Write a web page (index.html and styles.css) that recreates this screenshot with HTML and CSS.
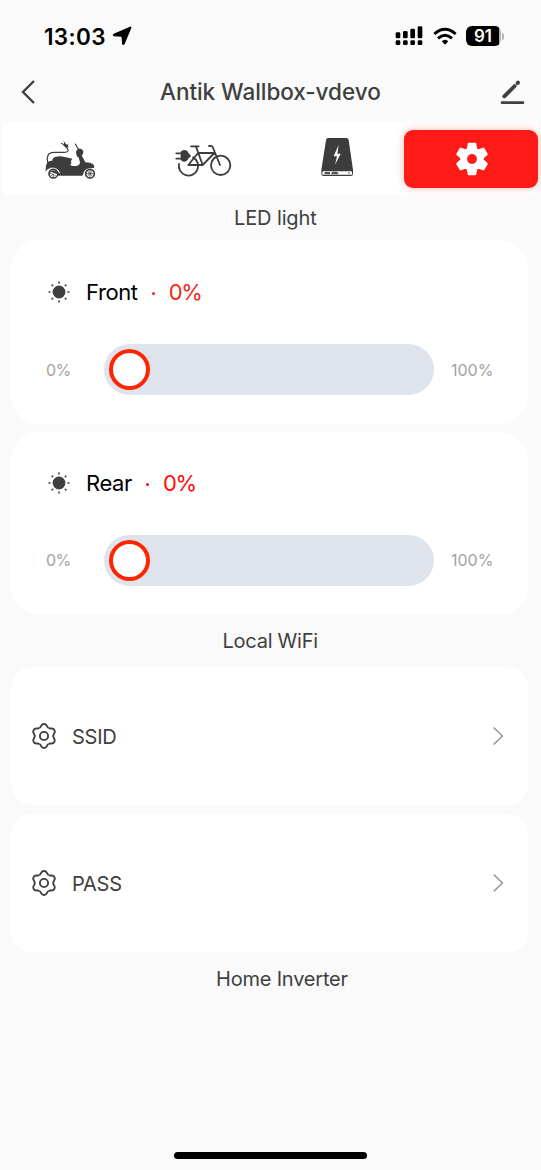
FILE: index.html
```html
<!DOCTYPE html>
<html lang="en">
<head>
<meta charset="utf-8">
<title>Antik Wallbox-vdevo</title>
<link rel="stylesheet" href="styles.css">
</head>
<body>
<div class="screen">
  <div class="status">
    <span class="time">13:03</span>
    <svg class="location" width="20" height="20" viewBox="0 0 60 60"><path d="M54 2 Q59 0 58 6 L38 54 Q33 60 30 53 L29 34 Q29 32 26 32 L6 31 Q-1 28 5 23 Z"/></svg>
    <svg class="signal" width="28" height="20" viewBox="0 0 84 60"><rect x="2" y="19" width="14" height="18" rx="4"/><rect x="24" y="15" width="14" height="22" rx="4"/><rect x="46" y="8" width="14" height="29" rx="4"/><rect x="68" y="1" width="14" height="36" rx="4"/><rect x="2" y="43" width="14" height="14" rx="4"/><rect x="24" y="43" width="14" height="14" rx="4"/><rect x="46" y="43" width="14" height="14" rx="4"/><rect x="68" y="43" width="14" height="14" rx="4"/></svg>
    <svg class="wifi" width="24" height="19" viewBox="0 0 72 57"><g fill="none" stroke="#000" stroke-width="8.5"><path d="M4 21 Q36 -7 68 21"/><path d="M15 34 Q36 15 57 34"/></g><path d="M26 43 Q36 34 46 43 L36 53 Z"/></svg>
    <span class="battery"><span class="level">91</span></span><span class="nub"></span>
  </div>

  <div class="nav">
    <svg class="back" width="18" height="26" viewBox="0 0 18 26"><path d="M16 2 L5 13 L16 24"/></svg>
    <h1 class="title">Antik Wallbox-vdevo</h1>
    <svg class="edit" width="26" height="26" viewBox="0 0 78 78"><path d="M16 52 L47 21" stroke-width="11.5"/><path d="M56 12 L57 11" stroke-width="12"/><path d="M9 71 H72" stroke-width="8"/></svg>
  </div>

  <div class="tabs">
    <div class="tab">
      <svg width="80" height="60" viewBox="-1 0 240 180">
        <g fill="#3c3c3c">
          <path d="M47 107 Q50 94 62 92 H116 Q125 93 123 100 L120 103 Q121 108 127 108 H138 Q148 107 149 97 L145 83 Q138 80 137 69 Q137 59 145 56 Q155 54 159 64 Q160 72 154 76 L165 97 Q184 97 192 107 L191 114 Q177 113 169 117 Q160 122 158 135 Q157 138 151 137 H91 Q88 116 69 114 Q53 114 45 125 Q47 113 47 107 Z"/>
          <path d="M67 86 Q73 79 91 79 Q113 83 126 86 L122 93 H66 Z"/>
          <path d="M97 44 L103 38 L115 49 Q111 56 105 52 Z"/>
        </g>
        <path d="M52 119 Q70 106 86 123" fill="none" stroke="#fff" stroke-width="1.6"/>
        <g fill="none" stroke="#3c3c3c" stroke-linecap="round">
          <path d="M55 104 Q46 85 56 71 Q64 66 78 67 H103 Q121 66 108 51" stroke-width="3.6"/>
          <path d="M97 42 L93 40 M103 38 L101 36 M110 46 L113 44" stroke-width="3"/>
          <path d="M144 58 L135 42" stroke-width="3.5"/>
          <circle cx="69" cy="131" r="13" fill="#fff" stroke-width="5"/>
          <circle cx="179" cy="131" r="13" fill="#fff" stroke-width="5"/>
          <path d="M69 121 V141 M59 131 H79 M62 124 L76 138 M62 138 L76 124 M179 121 V141 M169 131 H189 M172 124 L186 138 M172 138 L186 124" stroke-width="2.3"/>
        </g>
        <path d="M59 126 Q66 119 77 124 L93 132 L88 138 L66 132 Z" fill="#3c3c3c"/>
        <path d="M63 128 L78 134" stroke="#fff" stroke-width="4" stroke-linecap="round"/>
      </svg>
    </div>
    <div class="tab">
      <svg width="80" height="60" viewBox="-3 -1 240 180">
        <g fill="none" stroke="#3c3c3c" stroke-width="5.4" stroke-linecap="round" stroke-linejoin="round">
          <path d="M42 101 A29 29 0 1 0 84 81"/>
          <circle cx="167" cy="105" r="29"/>
          <path d="M78 48 H101 M93 49 L113 104 H70 L99 68 H148 L113 104 M165 104 L143 50 Q141 46 137 47 H132"/>
          <path d="M34 69 H48 M34 85 H48"/>
        </g>
        <path d="M47 64 Q52 58 60 59 Q68 60 72 70 L77 75 V79 L71 83 Q67 94 57 94 Q51 94 47 88 Z" fill="#3c3c3c"/>
      </svg>
    </div>
    <div class="tab">
      <svg width="80" height="60" viewBox="-7 15 240 180">
        <path d="M87 39 H141 Q147 39 148 45 L161 135 V147 Q160 153 154 153 H72 Q66 152 66 146 V135 L80 45 Q81 39 87 39 Z" fill="#3c3c3c"/>
        <rect x="69" y="139" width="89" height="10" rx="3" fill="#fff"/>
        <path d="M76 141 H92 V148 H76 Z M96 148 V143 L101 140 H112 L117 144 V148 Z" fill="#555"/><circle cx="149" cy="144" r="2.5" fill="#555"/>
        <path d="M118 59 L103 94 H113 L107 119 L124 86 H114 Z" fill="#fff"/>
      </svg>
    </div>
    <div class="tab active">
      <svg width="34" height="34" viewBox="-17 -17 34 34">
        <g fill="#fff"><circle r="11.6"/>
          <path id="tooth" d="M-5.4 -9.5 L-4.2 -15.4 Q-4 -16.2 -3.2 -16.2 H3.2 Q4 -16.2 4.2 -15.4 L5.4 -9.5 Z"/>
          <use href="#tooth" transform="rotate(60)"/><use href="#tooth" transform="rotate(120)"/><use href="#tooth" transform="rotate(180)"/><use href="#tooth" transform="rotate(240)"/><use href="#tooth" transform="rotate(300)"/>
        </g><circle r="4.9" fill="#fe1b17"/>
      </svg>
    </div>
  </div>

  <h2 class="section led">LED light</h2>
  <div class="card light">
    <div class="row">
      <svg class="sun" width="22" height="22" viewBox="-11 -11 22 22"><circle r="5.6"/><path d="M0-9.9V-9M0 9.9V9M-9.9 0H-9M9.9 0H9M-6.9-6.9L-6.3-6.3M6.9 6.9L6.3 6.3M-6.9 6.9L-6.3 6.3M6.9-6.9L6.3-6.3"/></svg>
      <span class="name front">Front</span><span class="dot warm"></span><span class="value warm-text">0%</span>
    </div>
    <div class="slider"><span class="min">0%</span><div class="track"><div class="thumb"></div></div><span class="max">100%</span></div>
  </div>
  <div class="card light second">
    <div class="row">
      <svg class="sun" width="22" height="22" viewBox="-11 -11 22 22"><circle r="5.6"/><path d="M0-9.9V-9M0 9.9V9M-9.9 0H-9M9.9 0H9M-6.9-6.9L-6.3-6.3M6.9 6.9L6.3 6.3M-6.9 6.9L-6.3 6.3M6.9-6.9L6.3-6.3"/></svg>
      <span class="name rear">Rear</span><span class="dot"></span><span class="value">0%</span>
    </div>
    <div class="slider"><span class="min">0%</span><div class="track"><div class="thumb"></div></div><span class="max">100%</span></div>
  </div>

  <h2 class="section local">Local WiFi</h2>
  <div class="card link">
    <svg class="gear" width="28" height="28" viewBox="-14 -14 28 28"><path id="lobe" d="M-4.6-8C-2.2-9.3-3.4-12 0-12C3.4-12 2.2-9.3 4.6-8"/><use href="#lobe" transform="rotate(60)"/><use href="#lobe" transform="rotate(120)"/><use href="#lobe" transform="rotate(180)"/><use href="#lobe" transform="rotate(240)"/><use href="#lobe" transform="rotate(300)"/><circle r="4.1"/></svg>
    <span class="label">SSID</span>
    <svg class="chevron" width="12" height="20" viewBox="0 0 12 20"><path d="M1.6 1.5L10.4 10L1.6 18.5"/></svg>
  </div>
  <div class="card link">
    <svg class="gear" width="28" height="28" viewBox="-14 -14 28 28"><use href="#lobe"/><use href="#lobe" transform="rotate(60)"/><use href="#lobe" transform="rotate(120)"/><use href="#lobe" transform="rotate(180)"/><use href="#lobe" transform="rotate(240)"/><use href="#lobe" transform="rotate(300)"/><circle r="4.1"/></svg>
    <span class="label">PASS</span>
    <svg class="chevron" width="12" height="20" viewBox="0 0 12 20"><path d="M1.6 1.5L10.4 10L1.6 18.5"/></svg>
  </div>
  <h2 class="section home">Home Inverter</h2>
  <div class="indicator"></div>
</div>
</body>
</html>
```
FILE: styles.css
```css
* { box-sizing: border-box; }
body { margin: 0; background: #fafafa; font-family: Inter, "Liberation Sans", sans-serif; color: #404040; }
svg { display: block; flex: none; }
h1, h2 { margin: 0; font-weight: 400; }
span { white-space: nowrap; }
.screen { width: 541px; height: 1170px; display: flex; flex-direction: column; overflow: hidden; }

.status { height: 72px; flex: none; display: flex; align-items: center; padding-left: 44px; color: #000; }
.time { width: 68px; font-size: 22.5px; font-weight: 600; letter-spacing: 0.35px; }
.signal { margin-left: 263px; }
.wifi { margin-left: 10px; }
.battery { width: 35px; height: 20px; margin-left: 9px; border-radius: 6px; background: linear-gradient(90deg, #000 33px, #b5b5b5 33px); }
.level { display: block; width: 34px; text-align: center; color: #fff; font-size: 17px; line-height: 20px; font-weight: 600; }
.nub { width: 2px; height: 7px; margin-left: 1px; border-radius: 0 3px 3px 0; background: #b5b5b5; }

.nav { height: 50px; flex: none; display: flex; align-items: flex-start; padding: 7px 16px 0 18px; }
.back { fill: none; stroke: #404040; stroke-width: 2.4; }
.title { flex: 1; padding: 0 0 0 124px; margin-top: -1px; font-size: 22.5px; line-height: 28px; font-weight: 500; letter-spacing: -0.05px; white-space: nowrap; }
.edit { fill: none; stroke: #404040; stroke-linecap: round; }

.tabs { height: 73px; flex: none; margin: 0 3px; padding: 8px 0; display: grid; grid-template-columns: repeat(4, 1fr); background: #fff; }
.tab { display: flex; justify-content: center; align-items: flex-start; }
.active { height: 58px; align-items: center; background: #fe1b17; border-radius: 9px; box-shadow: 0 0 8px rgba(254, 27, 23, 0.3); }
.active svg { margin-left: 2px; }

.section { flex: none; height: 45px; line-height: 46px; font-size: 20px; letter-spacing: -0.12px; white-space: nowrap; }
.led { padding-left: 234px; }
.local { height: 44px; line-height: 36px; padding-left: 222.5px; letter-spacing: -0.25px; }
.home { height: 46px; line-height: 45px; margin-top: -4px; padding-left: 216px; letter-spacing: -0.2px; }

.card { flex: none; margin: 0 13px 8px 11px; background: #fff; }
.light { height: 183.5px; border-radius: 28px; padding: 38px 0 0 35px; }
.second { padding-top: 37px; }
.row { display: flex; align-items: center; height: 28px; }
.sun { margin-left: 2px; fill: #404040; stroke: #404040; stroke-width: 1.6; stroke-linecap: round; }
.name { margin-left: 16px; font-size: 22px; color: #000; letter-spacing: -0.4px; }
.dot { width: 3px; height: 3px; border-radius: 50%; background: #ff0a0a; margin: 3px 0 0 14px; }
.value { margin-left: 14px; font-size: 22px; color: #ff0a0a; letter-spacing: -1.3px; }
.warm { background: #f42a18; }
.warm-text { color: #f42a18; }
.slider { display: flex; align-items: center; margin-top: 38px; height: 51px; font-size: 16px; color: #a2a2a2; }
.min { width: 58px; letter-spacing: -0.5px; }
.track { width: 330px; height: 51px; flex: none; padding: 5px; border-radius: 26px; background: #dfe4ec; }
.thumb { width: 41px; height: 41px; border: 4.5px solid #ff2500; border-radius: 50%; background: #fff; }
.max { margin-left: 17px; }

.link { height: 138px; border-radius: 20px; margin-bottom: 9px; display: flex; align-items: center; padding: 0 24px 0 19px; }
.gear { fill: none; stroke: #404040; stroke-width: 1.9; }
.label { margin: 1px 0 0 14px; font-size: 20px; letter-spacing: -0.25px; }
.chevron { margin-left: auto; fill: none; stroke: #999; stroke-width: 1.6; }
.indicator { width: 193px; height: 7px; flex: none; margin: auto auto 11px 174px; border-radius: 4px; background: #000; }
```
